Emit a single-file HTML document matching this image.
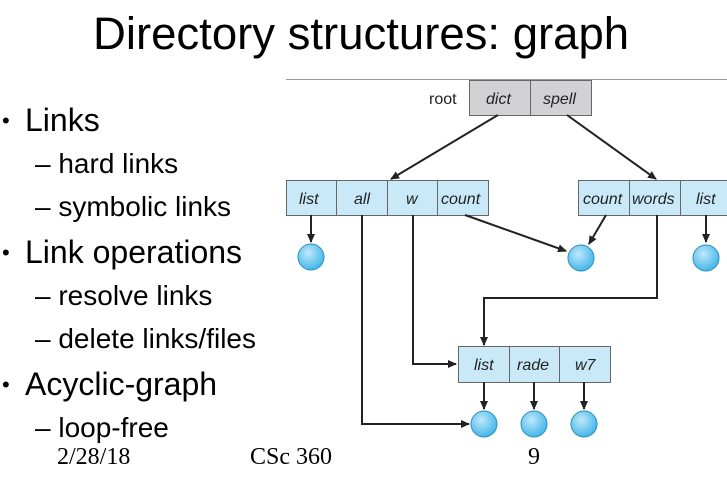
<!DOCTYPE html>
<html><head><style>
body{margin:0;width:727px;height:481px;background:#fff;position:relative;overflow:hidden;font-family:"Liberation Sans",sans-serif;color:#000}
.t{position:absolute;white-space:nowrap}
.b{position:absolute;left:2px;font-size:22px}
</style></head><body>
<div class="t" style="left:93px;top:8px;font-size:45.5px">Directory structures: graph</div>
<div class="b" style="top:108px">•</div><div class="t" style="left:25px;top:102px;font-size:32px">Links</div>
<div class="t" style="left:35px;top:148px;font-size:28px">– hard links</div>
<div class="t" style="left:35px;top:191px;font-size:28px">– symbolic links</div>
<div class="b" style="top:240px">•</div><div class="t" style="left:25px;top:234px;font-size:32px">Link operations</div>
<div class="t" style="left:35px;top:280px;font-size:28px">– resolve links</div>
<div class="t" style="left:35px;top:323px;font-size:28px">– delete links/files</div>
<div class="b" style="top:372px">•</div><div class="t" style="left:25px;top:366px;font-size:32px">Acyclic-graph</div>
<div class="t" style="left:35px;top:412px;font-size:28px">– loop-free</div>
<div class="t" style="left:57px;top:444px;font-size:24px;font-family:'Liberation Serif',serif">2/28/18</div>
<div class="t" style="left:250px;top:444px;font-size:24px;font-family:'Liberation Serif',serif">CSc 360</div>
<div class="t" style="left:528px;top:444px;font-size:24px;font-family:'Liberation Serif',serif">9</div>
<svg width="727" height="481" style="position:absolute;left:0;top:0" font-family="Liberation Sans" font-style="italic" font-size="16" fill="#222">
<defs>
<marker id="a" markerWidth="10" markerHeight="10" refX="8" refY="4" orient="auto" markerUnits="userSpaceOnUse"><path d="M0,0 L9,4 L0,8 Z" fill="#222"/></marker>
<radialGradient id="g" cx="0.4" cy="0.35" r="0.7"><stop offset="0" stop-color="#bfe8fb"/><stop offset="1" stop-color="#3cb3e6"/></radialGradient>
</defs>
<line x1="286" y1="79.5" x2="727" y2="79.5" stroke="#999" stroke-width="1"/>
<text x="429" y="104" font-style="normal" fill="#222">root</text>
<rect x="469.5" y="80.5" width="122" height="35" fill="#d2d2d4" stroke="#666"/>
<line x1="530.5" y1="80" x2="530.5" y2="115" stroke="#666"/>
<text x="486" y="104">dict</text><text x="543" y="104">spell</text>
<g fill="#c9e9f8" stroke="#666">
<rect x="286.5" y="180.5" width="202" height="35"/>
<rect x="578.5" y="180.5" width="160" height="35"/>
<rect x="458.5" y="346.5" width="152" height="36"/>
</g>
<g stroke="#666">
<line x1="336.5" y1="180" x2="336.5" y2="215"/><line x1="387.5" y1="180" x2="387.5" y2="215"/><line x1="437.5" y1="180" x2="437.5" y2="215"/>
<line x1="629.5" y1="180" x2="629.5" y2="215"/><line x1="680.5" y1="180" x2="680.5" y2="215"/>
<line x1="509.5" y1="346" x2="509.5" y2="382"/><line x1="559.5" y1="346" x2="559.5" y2="382"/>
</g>
<text x="299" y="204">list</text><text x="354" y="204">all</text><text x="406" y="204">w</text><text x="441" y="204">count</text>
<text x="583" y="204">count</text><text x="632" y="204">words</text><text x="696" y="204">list</text>
<text x="474" y="370">list</text><text x="517" y="370">rade</text><text x="575" y="370">w7</text>
<g stroke="#222" stroke-width="2" fill="none" marker-end="url(#a)">
<line x1="498" y1="115" x2="391" y2="179"/>
<line x1="567" y1="115" x2="656" y2="179"/>
<line x1="311" y1="215" x2="311" y2="242"/>
<line x1="465" y1="215" x2="566" y2="251"/>
<line x1="606" y1="215" x2="589" y2="244"/>
<line x1="706" y1="215" x2="706" y2="242"/>
<polyline points="362,215 362,424 469,424"/>
<polyline points="413,215 413,364 456,364"/>
<polyline points="657,215 657,298 484,298 484,345"/>
<line x1="484" y1="382" x2="484" y2="409"/>
<line x1="534" y1="382" x2="534" y2="409"/>
<line x1="584" y1="382" x2="584" y2="409"/>
</g>
<g fill="url(#g)" stroke="#2a8fbf" stroke-width="1">
<circle cx="311" cy="257" r="13"/><circle cx="581" cy="258" r="13"/><circle cx="706" cy="258" r="13"/>
<circle cx="484" cy="424" r="13"/><circle cx="534" cy="424" r="13"/><circle cx="584" cy="424" r="13"/>
</g>
</svg>
</body></html>
